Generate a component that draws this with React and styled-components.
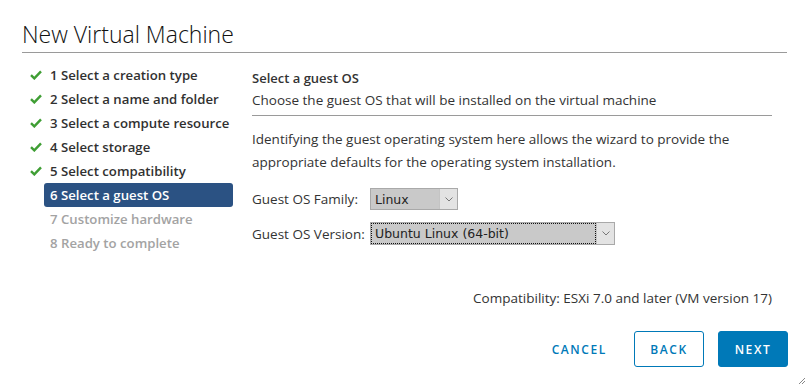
import styled, { createGlobalStyle } from "styled-components";

const GlobalStyle = createGlobalStyle`
  body {
    margin: 0;
    background: #fff;
    font-family: "Open Sans", "Liberation Sans", sans-serif;
    color: #333;
  }
`;

const Dialog = styled.div`
  position: relative;
  width: 810px;
  height: 389px;
  box-sizing: border-box;
  padding: 0 22px 0 22px;
  display: flex;
  flex-direction: column;
`;

const Header = styled.div`
  height: 53px;
  box-sizing: border-box;
  padding-top: 20px;
  border-bottom: 1px solid #9a9a9a;
  margin-right: 1px;
`;

const Title = styled.h1`
  margin: 0;
  font-size: 23px;
  line-height: 28px;
  font-weight: 300;
  color: #111;
`;

const Body = styled.div`
  display: flex;
  height: 266px;
`;

const Nav = styled.ul`
  list-style: none;
  margin: 0;
  padding: 10px 0 0 0;
  width: 230px;
`;

const NavItem = styled.li`
  display: flex;
  align-items: center;
  height: 24px;
`;

const Gutter = styled.span`
  width: 22px;
  display: flex;
  align-items: center;
  padding-left: 8px;
  box-sizing: border-box;
`;

const NavLabel = styled.span`
  width: 189px;
  height: 24px;
  line-height: 24px;
  box-sizing: border-box;
  padding-left: 6px;
  border-radius: 3px;
  font-size: 13.2px;
  font-weight: 600;
  white-space: nowrap;
  background: ${(p) => (p.$active ? "#2b5283" : "transparent")};
  color: ${(p) => (p.$active ? "#fff" : p.$disabled ? "#a3a3a3" : "#313131")};
`;

const Content = styled.div`
  width: 520px;
  padding-top: 16px;
  display: flex;
  flex-direction: column;
  font-size: 13.5px;
`;

const Heading = styled.div`
  font-size: 13px;
  font-weight: 600;
  line-height: 18px;
`;

const Sub = styled.div`
  line-height: 18px;
  padding: 4px 0 6px;
  border-bottom: 1px solid #9a9a9a;
`;

const Para = styled.p`
  margin: 12px 0 0;
  line-height: 23px;
`;

const Form = styled.div`
  margin-top: 14px;
  display: grid;
  grid-template-columns: 118px auto;
  row-gap: 12px;
  align-items: center;
  justify-items: start;
`;

const Label = styled.label`
  white-space: nowrap;
`;

const Select = styled.div`
  width: ${(p) => p.$w}px;
  height: ${(p) => p.$h}px;
  box-sizing: border-box;
  border: 1px solid #a9a9a9;
  display: flex;
  background: #c9c9c9;
  font-family: "DejaVu Sans", "Liberation Sans", sans-serif;
  font-size: 12.5px;
  color: #222;
`;

const SelectValue = styled.span`
  flex: 1;
  display: flex;
  align-items: center;
  padding-left: 3px;
  margin: 1px;
  outline: ${(p) => (p.$focus ? "1px dotted #111" : "none")};
`;

const Arrow = styled.span`
  width: 17px;
  display: flex;
  align-items: center;
  justify-content: center;
  background: #e3e3e3;
  border-left: 1px solid #c4c4c4;
`;

const Compat = styled.div`
  margin-top: auto;
  padding-bottom: 12px;
  text-align: right;
`;

const Footer = styled.div`
  display: flex;
  justify-content: flex-end;
  align-items: center;
  gap: 14px;
  padding-top: 12px;
`;

const Button = styled.button`
  height: 36px;
  box-sizing: border-box;
  padding: 0 ${(p) => (p.$flat ? "12px" : "15px")};
  min-width: ${(p) => (p.$flat ? "0" : "70px")};
  border-radius: 3px;
  font-family: inherit;
  font-size: 12px;
  font-weight: 600;
  letter-spacing: 1.6px;
  border: 1px solid ${(p) => (p.$flat ? "transparent" : "#0079b8")};
  background: ${(p) => (p.$primary ? "#0079b8" : "#fff")};
  color: ${(p) => (p.$primary ? "#fff" : "#0079b8")};
`;

const Grip = styled.svg`
  position: absolute;
  right: 4px;
  bottom: 4px;
`;

const Check = () => (
  <svg width="12" height="10" viewBox="0 0 12 10">
    <path d="M1 5.2 L4.3 8.4 L11 1.4" fill="none" stroke="#3f9e34" strokeWidth="2.4" />
  </svg>
);

const Chevron = () => (
  <svg width="8" height="5" viewBox="0 0 8 5">
    <path d="M0.5 0.5 L4 4 L7.5 0.5" fill="none" stroke="#777" strokeWidth="1" />
  </svg>
);

const steps = [
  { n: 1, t: "Select a creation type", done: true },
  { n: 2, t: "Select a name and folder", done: true },
  { n: 3, t: "Select a compute resource", done: true },
  { n: 4, t: "Select storage", done: true },
  { n: 5, t: "Select compatibility", done: true },
  { n: 6, t: "Select a guest OS", active: true },
  { n: 7, t: "Customize hardware", disabled: true },
  { n: 8, t: "Ready to complete", disabled: true },
];

export default function App() {
  return (
    <>
      <GlobalStyle />
      <Dialog>
        <Header>
          <Title>New Virtual Machine</Title>
        </Header>
        <Body>
          <Nav>
            {steps.map((s) => (
              <NavItem key={s.n}>
                <Gutter>{s.done && <Check />}</Gutter>
                <NavLabel $active={s.active} $disabled={s.disabled}>
                  {s.n} {s.t}
                </NavLabel>
              </NavItem>
            ))}
          </Nav>
          <Content>
            <Heading>Select a guest OS</Heading>
            <Sub>Choose the guest OS that will be installed on the virtual machine</Sub>
            <Para>
              Identifying the guest operating system here allows the wizard to provide the
              appropriate defaults for the operating system installation.
            </Para>
            <Form>
              <Label>Guest OS Family:</Label>
              <Select $w={88} $h={22}>
                <SelectValue>Linux</SelectValue>
                <Arrow>
                  <Chevron />
                </Arrow>
              </Select>
              <Label>Guest OS Version:</Label>
              <Select $w={245} $h={23}>
                <SelectValue $focus>Ubuntu Linux (64-bit)</SelectValue>
                <Arrow>
                  <Chevron />
                </Arrow>
              </Select>
            </Form>
            <Compat>Compatibility: ESXi 7.0 and later (VM version 17)</Compat>
          </Content>
        </Body>
        <Footer>
          <Button $flat>CANCEL</Button>
          <Button>BACK</Button>
          <Button $primary>NEXT</Button>
        </Footer>
        <Grip width="8" height="8" viewBox="0 0 8 8">
          <path d="M7 1 L1 7 M7 4 L4 7" stroke="#888" strokeWidth="1" />
        </Grip>
      </Dialog>
    </>
  );
}
